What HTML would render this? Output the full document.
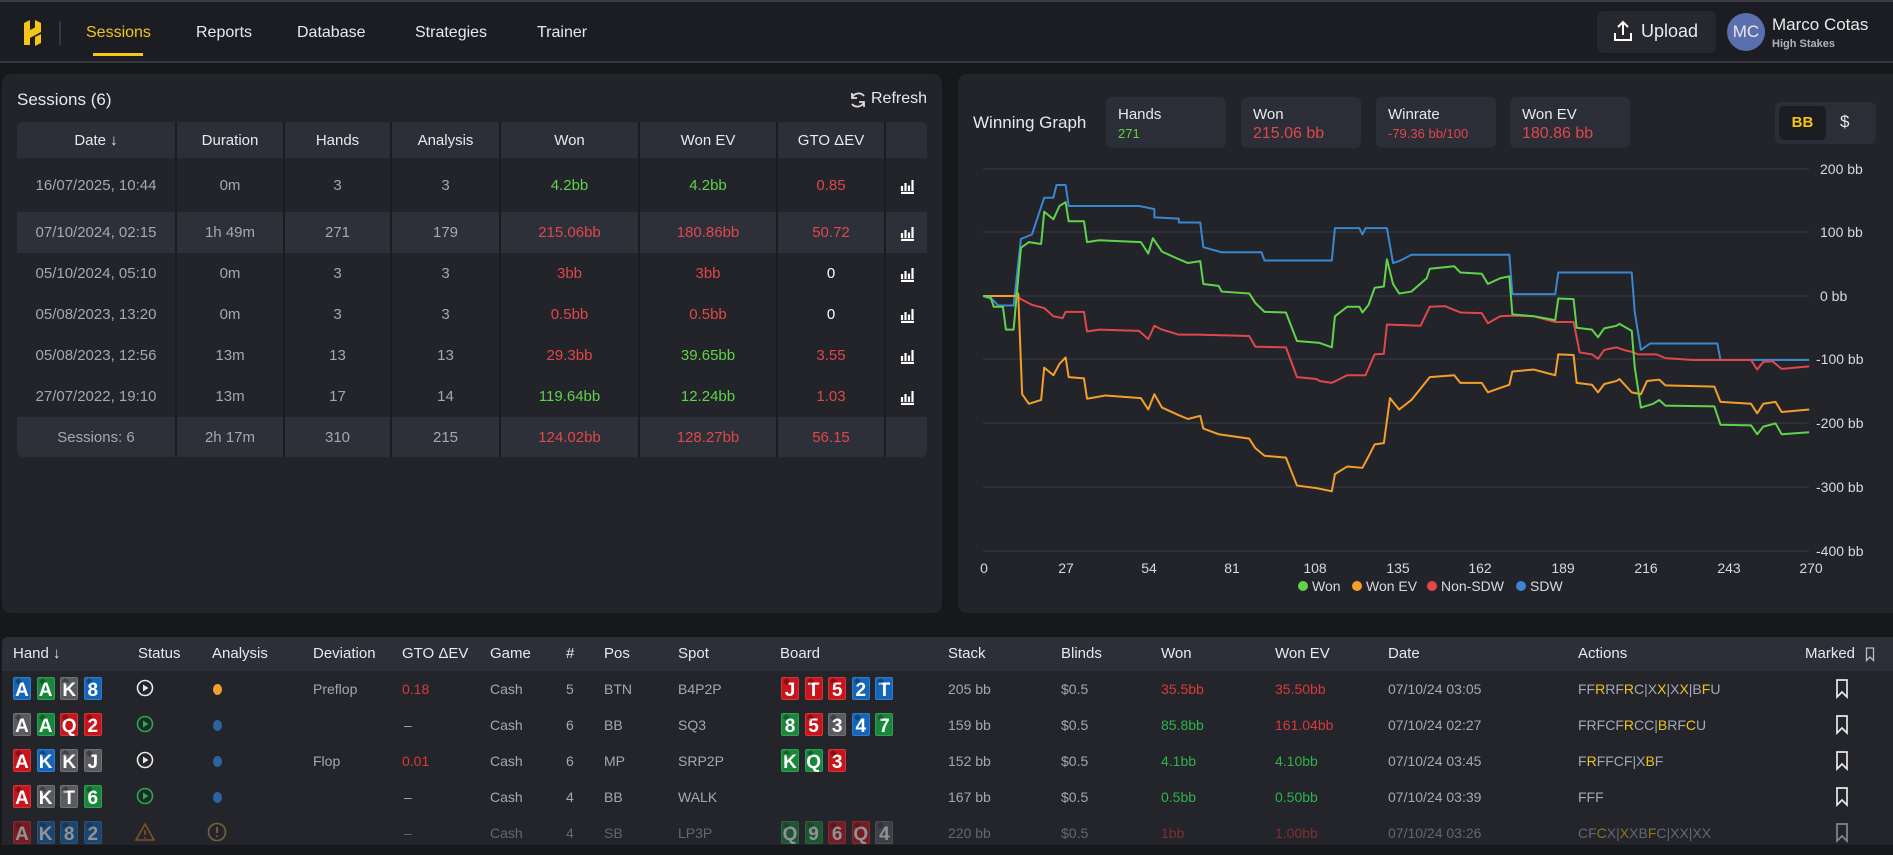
<!DOCTYPE html>
<html><head><meta charset="utf-8">
<style>
*{box-sizing:border-box;margin:0;padding:0}
body{width:1893px;height:855px;overflow:hidden;background:#17181c;font-family:"Liberation Sans",sans-serif;color:#e8e9ec;position:relative}
.a{position:absolute;white-space:nowrap}
.nav{position:absolute;left:0;top:0;width:1893px;height:63px;background:#1c1d22;border-top:2px solid #3a3b40;border-bottom:2px solid #34363c}
.navi{position:absolute;top:22px;font-size:16px;color:#e8e9ec}
.panel{position:absolute;background:#222429;border-radius:9px}
table{border-collapse:collapse;table-layout:fixed}
.st{position:absolute;left:17px;top:122px;width:910px;border-radius:6px;overflow:hidden;font-size:15px}
.st td{text-align:center;border-left:2px solid #1b1c20;color:#a4a8b3}
.st td:first-child{border-left:none}
.st tr.h td{background:#2c2f37;color:#e8e9ec;height:36px}
.st tr.l td{background:#2d3038}
.st tr.d td{background:#222429}
.g{color:#5fd34a!important}.r{color:#e0474c!important}.w{color:#fff!important}
.box{position:absolute;top:97px;width:120px;height:51px;background:#2b2e36;border-radius:6px;padding:8px 12px;font-size:15px;line-height:19px}
.box b{font-weight:normal;display:block}
.bt{position:absolute;left:2px;top:637px;width:1891px;height:208px;background:#23252b;border-radius:6px 0 0 0;overflow:hidden}
.bh{position:absolute;left:0;top:0;width:100%;height:34px;background:#2c2f37}
.bt .a{font-size:14px;color:#a4a8b3}
.bh .a{font-size:15px;color:#e8e9ec;top:8px}
.c{position:absolute;width:18px;height:23px;border-radius:2px;color:#fff;font-weight:bold;font-size:19px;text-align:center;line-height:25px;border:1px solid rgba(255,255,255,.15)}
.c::before{content:"";position:absolute;left:2px;top:1px;width:5px;height:5px;background:rgba(0,0,0,.3);transform:rotate(45deg)}
.R{background:#c8141b}.B{background:#1566b8}.G{background:#17883a}.K{background:#5a5b5f}
.y{color:#f2c21b}
</style></head><body>
<div class="nav">
<svg class="a" style="left:22px;top:16px" width="21" height="30" viewBox="0 0 21 30"><path d="M2 5 L8 2 L8 12 L13 9.5 L13 2 L19 5 L19 14 L8 20 L8 27 L2 27 Z M13 19 L19 16 L19 25 L13 28 Z" fill="#f5c518"/></svg>
<div class="a" style="left:59px;top:19px;width:2px;height:24px;background:#35373d"></div>
<div class="navi" style="left:86px;color:#f5c518">Sessions</div>
<div class="a" style="left:93px;top:51px;width:50px;height:3px;background:#f5c518"></div>
<div class="navi" style="left:196px">Reports</div>
<div class="navi" style="left:297px">Database</div>
<div class="navi" style="left:415px">Strategies</div>
<div class="navi" style="left:537px">Trainer</div>
<div class="a" style="left:1597px;top:9px;width:119px;height:42px;background:#26282e;border-radius:6px"></div>
<svg class="a" style="left:1613px;top:18px" width="20" height="22" viewBox="0 0 20 22"><path d="M10 15V2M5 7l5-5 5 5M2 13v7h16v-7" fill="none" stroke="#fff" stroke-width="2"/></svg>
<div class="a" style="left:1641px;top:19px;font-size:18px">Upload</div>
<div class="a" style="left:1727px;top:11px;width:38px;height:38px;border-radius:50%;background:#5b6fae;text-align:center;line-height:38px;font-size:17px">MC</div>
<div class="a" style="left:1772px;top:13px;font-size:17px">Marco Cotas</div>
<div class="a" style="left:1772px;top:36px;font-size:11px;color:#b0b3ba;font-weight:bold">High Stakes</div>
</div>

<div class="panel" style="left:2px;top:74px;width:940px;height:539px"></div>
<div class="a" style="left:17px;top:90px;font-size:17px">Sessions (6)</div>
<svg class="a" style="left:849px;top:90px" width="18" height="20" viewBox="0 0 18 20"><path d="M15 6A7 7 0 0 0 3 8M3 3v5h5M3 14a7 7 0 0 0 12-2M15 17v-5h-5" fill="none" stroke="#ddd" stroke-width="1.8"/></svg>
<div class="a" style="left:871px;top:90px;font-size:16px">Refresh</div>
<table class="st">
<colgroup><col style="width:159px"><col style="width:108px"><col style="width:107px"><col style="width:109px"><col style="width:139px"><col style="width:138px"><col style="width:108px"><col style="width:42px"></colgroup>
<tr class="h"><td>Date ↓</td><td>Duration</td><td>Hands</td><td>Analysis</td><td>Won</td><td>Won EV</td><td>GTO ΔEV</td><td></td></tr>
<tr class="d" style="height:54px"><td>16/07/2025, 10:44</td><td>0m</td><td>3</td><td>3</td><td class="g">4.2bb</td><td class="g">4.2bb</td><td class="r">0.85</td><td>ICON</td></tr>
<tr class="l" style="height:41px"><td>07/10/2024, 02:15</td><td>1h 49m</td><td>271</td><td>179</td><td class="r">215.06bb</td><td class="r">180.86bb</td><td class="r">50.72</td><td>ICON</td></tr>
<tr class="d" style="height:41px"><td>05/10/2024, 05:10</td><td>0m</td><td>3</td><td>3</td><td class="r">3bb</td><td class="r">3bb</td><td class="w">0</td><td>ICON</td></tr>
<tr class="d" style="height:41px"><td>05/08/2023, 13:20</td><td>0m</td><td>3</td><td>3</td><td class="r">0.5bb</td><td class="r">0.5bb</td><td class="w">0</td><td>ICON</td></tr>
<tr class="d" style="height:41px"><td>05/08/2023, 12:56</td><td>13m</td><td>13</td><td>13</td><td class="r">29.3bb</td><td class="g">39.65bb</td><td class="r">3.55</td><td>ICON</td></tr>
<tr class="d" style="height:41px"><td>27/07/2022, 19:10</td><td>13m</td><td>17</td><td>14</td><td class="g">119.64bb</td><td class="g">12.24bb</td><td class="r">1.03</td><td>ICON</td></tr>
<tr class="l" style="height:40px"><td>Sessions: 6</td><td>2h 17m</td><td>310</td><td>215</td><td class="r">124.02bb</td><td class="r">128.27bb</td><td class="r">56.15</td><td></td></tr>
</table>
<script>
document.querySelectorAll('.st td').forEach(function(t){if(t.textContent==='ICON'){t.innerHTML='<svg width="16" height="16" viewBox="0 0 16 16" style="vertical-align:middle"><path d="M2 15h13M3 13V8M6.5 13V5M10 13V7.5M13.5 13V2" stroke="#fff" stroke-width="2.2" fill="none"/></svg>';}});
</script>

<div class="panel" style="left:958px;top:74px;width:935px;height:539px;border-radius:9px 0 0 9px"></div>
<div class="a" style="left:973px;top:113px;font-size:17px">Winning Graph</div>
<div class="box" style="left:1106px"><b>Hands</b><b style="font-size:13px;color:#5fd34a">271</b></div>
<div class="box" style="left:1241px"><b>Won</b><b style="font-size:16px;color:#e0474c">215.06 bb</b></div>
<div class="box" style="left:1376px"><b>Winrate</b><b style="font-size:13px;color:#e0474c">-79.36 bb/100</b></div>
<div class="box" style="left:1510px"><b>Won EV</b><b style="font-size:16px;color:#e0474c">180.86 bb</b></div>
<div class="a" style="left:1775px;top:102px;width:101px;height:42px;background:#2b2e36;border-radius:6px"></div>
<div class="a" style="left:1779px;top:106px;width:47px;height:34px;background:#1c1d21;border-radius:5px;color:#f5c518;font-weight:bold;font-size:15px;text-align:center;line-height:34px">BB</div>
<div class="a" style="left:1840px;top:112px;font-size:17px">$</div>

<svg class="a" style="left:0;top:0" width="1893" height="613">
<g stroke="#33353b" stroke-width="1.5">
<line x1="983" y1="169" x2="1809" y2="169"/><line x1="983" y1="232" x2="1809" y2="232"/><line x1="983" y1="296" x2="1809" y2="296"/><line x1="983" y1="359" x2="1809" y2="359"/><line x1="983" y1="423" x2="1809" y2="423"/><line x1="983" y1="487" x2="1809" y2="487"/><line x1="983" y1="551" x2="1809" y2="551"/>
</g>
<g font-family="Liberation Sans" font-size="14" fill="#d8d9dc">
<text x="1820" y="174">200 bb</text><text x="1820" y="237">100 bb</text><text x="1820" y="301">0 bb</text><text x="1816" y="364">-100 bb</text><text x="1816" y="428">-200 bb</text><text x="1816" y="492">-300 bb</text><text x="1816" y="556">-400 bb</text>
<g text-anchor="middle"><text x="984" y="573">0</text><text x="1066" y="573">27</text><text x="1149" y="573">54</text><text x="1232" y="573">81</text><text x="1315" y="573">108</text><text x="1398" y="573">135</text><text x="1480" y="573">162</text><text x="1563" y="573">189</text><text x="1646" y="573">216</text><text x="1729" y="573">243</text><text x="1811" y="573">270</text></g>
<circle cx="1303" cy="586" r="5" fill="#5fd34a"/><text x="1312" y="591">Won</text>
<circle cx="1357" cy="586" r="5" fill="#f59e2a"/><text x="1366" y="591">Won EV</text>
<circle cx="1432" cy="586" r="5" fill="#e0474c"/><text x="1441" y="591">Non-SDW</text>
<circle cx="1521" cy="586" r="5" fill="#3a86d1"/><text x="1530" y="591">SDW</text>
</g>
<g transform="translate(983,296) scale(3.06,-0.634)" fill="none" stroke-width="2" stroke-linejoin="round">
<polyline vector-effect="non-scaling-stroke" stroke="#3a86d1" points="0,0 3,-5 5,-15 10,-15 12.4,90 16,97 20,155 23,155 24,175 27,175 28,142 51,142 56,137 56,124 64,122 64,116 71,116 72,77 78,69 91,69 92,56 114,56 115,107 123,107 124,97 125,107 132,107 134,52 136,55 140,65 172,65 173,3 187,3 188,37 212,37 213,-26 215,-85 218,-75 240,-75 241,-101 270,-101"/>
<polyline vector-effect="non-scaling-stroke" stroke="#e0474c" points="0,0 11,0 12.4,-5 16,-14 20,-19 23,-32 26,-35 27,-25 33,-25 34,-56 38,-53 51,-55 54,-68 56,-47 58.5,-53 64,-61 70,-61 87,-63 89,-80 99,-81 102.6,-128 109,-131 110,-134 114,-137 119,-125 125,-125 128,-92 131,-91 132,-45 143,-47 146,-17 151,-16 156,-26 163,-27 165,-43 169,-32 173,-31 180,-32 187,-41 193,-41 195,-89 199,-92 201,-99 203,-85 207,-81 210,-86 212,-88 214,-92 220,-92 223,-98 232,-101 241,-101 251,-101 253,-116 255,-104 258,-103 261,-115 270,-111"/>
<polyline vector-effect="non-scaling-stroke" stroke="#f59e2a" points="0,0 10.4,0 11.5,4 12.8,-155 15,-170 19,-164 20,-113 23,-125 25,-107 27,-97 28,-128 33,-130 34,-162 40,-157 51.6,-161 54,-179 56,-155 58.5,-176 64,-188 67,-194 71,-189 72,-209 77,-218 87,-225 89,-240 92,-252 99,-255 102.6,-299 109,-303 114,-308 115,-281 119,-269 124,-271 126,-253 128,-234 131,-232 133,-161 136,-179 140,-164 145,-134 146,-128 154,-125 156,-137 163,-137 165,-152 169,-145 172,-140 173,-119 180,-116 187,-125 188,-92 193,-93 194,-137 199,-140 201,-152 203,-139 207,-134 208,-131 212,-152 215,-155 217,-134 221,-132 223,-141 239,-143 241,-167 251,-170 253,-185 255,-170 259,-167 261,-183 270,-179"/>
<polyline vector-effect="non-scaling-stroke" stroke="#5fd34a" points="0,0 2.5,-2 3.5,-17 6.5,-17 7.5,-53 10,-53 11,1 12.4,76 15,85 19,82 20,133 23,121 25,142 27,148 28,118 33,118 34,85 38,88 51.6,85 54,67 55.5,91 58.5,70 64,58 67,52 71,55 72,19 77,16 78,7 87,4 89,-11 92,-25 99,-26 102.6,-71 110,-74 114,-81 115,-32 119,-17 123,-17 124,-26 126,-14 128,13 131,15 132,58 134,19 136,4 140,7 145,28 146,43 154,47 156,37 163,35 165,19 169,28 172,31 173,-29 180,-32 187,-38 188,-4 193,-5 194,-50 199,-53 201,-65 203,-51 207,-47 208,-44 212,-55 213,-113 215,-176 219,-170 221,-164 223,-173 239,-174 241,-203 251,-204 253,-218 255,-206 259,-201 261,-218 270,-215"/>
</g>
</svg>

<div class="bt">
<div class="bh">
<div class="a" style="left:11px">Hand ↓</div><div class="a" style="left:136px">Status</div><div class="a" style="left:210px">Analysis</div><div class="a" style="left:311px">Deviation</div><div class="a" style="left:400px">GTO ΔEV</div><div class="a" style="left:488px">Game</div><div class="a" style="left:564px">#</div><div class="a" style="left:602px">Pos</div><div class="a" style="left:676px">Spot</div><div class="a" style="left:778px">Board</div><div class="a" style="left:946px">Stack</div><div class="a" style="left:1059px">Blinds</div><div class="a" style="left:1159px">Won</div><div class="a" style="left:1273px">Won EV</div><div class="a" style="left:1386px">Date</div><div class="a" style="left:1576px">Actions</div><div class="a" style="left:1803px">Marked</div>
<svg class="a" style="left:1863px;top:10px" width="10" height="15" viewBox="0 0 10 15"><path d="M1.5 1h7v12.5l-3.5-3.5-3.5 3.5z" fill="none" stroke="#bbb" stroke-width="1.3"/></svg>
</div>
<div id="rows"></div>
</div>
<script>
var rows=[
{h:"AB AG KK 8B",st:"w",an:"#f0a030",dev:"Preflop",gto:"0.18",n:"5",pos:"BTN",spot:"B4P2P",board:"JR TR 5R 2B TB",stack:"205 bb",won:"35.5bb",wc:"#d83a3a",wev:"35.50bb",ec:"#d83a3a",date:"07/10/24 03:05",act:"FF<i>R</i>RF<i>R</i>C|X<i>X</i>|X<i>X</i>|B<i>F</i>U"},
{h:"AK AG QR 2R",st:"g",an:"#2b64a0",dev:"",gto:"–",n:"6",pos:"BB",spot:"SQ3",board:"8G 5R 3K 4B 7G",stack:"159 bb",won:"85.8bb",wc:"#2fb34a",wev:"161.04bb",ec:"#d83a3a",date:"07/10/24 02:27",act:"FRFCF<i>R</i>CC|<i>B</i>RF<i>C</i>U"},
{h:"AR KB KK JK",st:"w",an:"#2b64a0",dev:"Flop",gto:"0.01",n:"6",pos:"MP",spot:"SRP2P",board:"KG QG 3R",stack:"152 bb",won:"4.1bb",wc:"#2fb34a",wev:"4.10bb",ec:"#2fb34a",date:"07/10/24 03:45",act:"F<i>R</i>FFCF|X<i>B</i>F"},
{h:"AR KK TK 6G",st:"g",an:"#2b64a0",dev:"",gto:"–",n:"4",pos:"BB",spot:"WALK",board:"",stack:"167 bb",won:"0.5bb",wc:"#2fb34a",wev:"0.50bb",ec:"#2fb34a",date:"07/10/24 03:39",act:"FFF"},
{h:"AR KB 8B 2B",st:"x",an:"x",dev:"",gto:"–",n:"4",pos:"SB",spot:"LP3P",board:"QG 9G 6R QR 4K",stack:"220 bb",won:"1bb",wc:"#d83a3a",wev:"1.00bb",ec:"#d83a3a",date:"07/10/24 03:26",act:"CF<i>C</i>X|<i>X</i>XB<i>F</i>C|XX|XX",dim:1}];
var out="";
rows.forEach(function(r,i){
 var top=34+i*36;
 var s='<div style="position:absolute;left:0;top:'+top+'px;width:1891px;height:36px;'+(r.dim?'opacity:.5':'')+'">';
 function cards(str,x0){var o="";if(!str)return o;str.split(" ").forEach(function(c,j){o+='<div class="c '+c[1]+'" style="left:'+(x0+j*23.6)+'px;top:6px">'+c[0]+'</div>';});return o;}
 s+=cards(r.h,11);
 var ic;
 if(r.st=="x") ic='<svg class="a" style="left:133px;top:7px" width="20" height="20" viewBox="0 0 20 20"><path d="M10 2L19 18H1Z M10 8v5 M10 15v1.5" fill="none" stroke="#d7801c" stroke-width="1.6"/></svg>';
 else ic='<svg class="a" style="left:134px;top:8px" width="18" height="18" viewBox="0 0 18 18"><circle cx="9" cy="9" r="7.5" fill="none" stroke="'+(r.st=="g"?"#22b04a":"#e8e8e8")+'" stroke-width="1.6"/><path d="M7 5.5v7l5.5-3.5z" fill="'+(r.st=="g"?"#22b04a":"#e8e8e8")+'"/></svg>';
 s+=ic;
 if(r.an=="x") s+='<svg class="a" style="left:205px;top:7px" width="20" height="20" viewBox="0 0 20 20"><circle cx="10" cy="10" r="8.5" fill="none" stroke="#c9a050" stroke-width="1.6"/><path d="M10 5v6M10 13.5v1.5" stroke="#c9a050" stroke-width="1.8"/></svg>';
 else s+='<div class="a" style="left:211px;top:13px;width:9px;height:11px;border-radius:50%;background:'+r.an+'"></div>';
 function t(x,v,c){return '<div class="a" style="left:'+x+'px;top:10px;'+(c?'color:'+c:'')+'">'+v+'</div>';}
 s+=t(311,r.dev)+t(r.gto=="–"?402:400,r.gto,r.gto=="–"?"":"#d83a3a")+t(488,"Cash")+t(564,r.n)+t(602,r.pos)+t(676,r.spot);
 s+=cards(r.board,779);
 s+=t(946,r.stack)+t(1059,"$0.5")+t(1159,r.won,r.wc)+t(1273,r.wev,r.ec)+t(1386,r.date)+t(1576,r.act.replace(/<i>/g,'<span class="y">').replace(/<\/i>/g,'</span>'));
 s+='<svg class="a" style="left:1833px;top:8px" width="14" height="20" viewBox="0 0 14 20"><path d="M2 1h10v17l-5-5-5 5z" fill="none" stroke="#e8e8e8" stroke-width="1.7"/></svg>';
 s+='</div>';out+=s;});
document.getElementById("rows").innerHTML=out;
</script>
</body></html>
